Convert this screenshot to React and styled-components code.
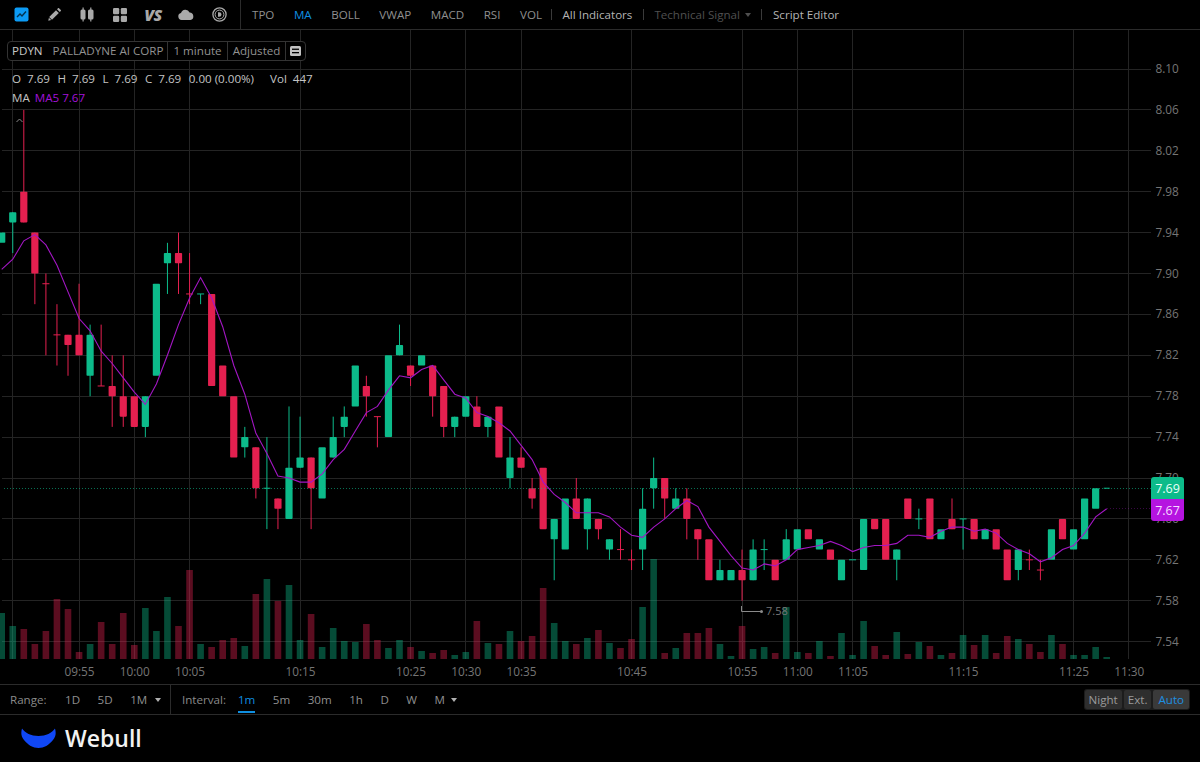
import React from "react";
import styled, { createGlobalStyle } from "styled-components";

const GlobalStyle = createGlobalStyle`
  html, body {
    margin: 0;
    padding: 0;
    background: #000;
  }
  body {
    font-family: "Open Sans", "Liberation Sans", sans-serif;
    font-size: 11.6px;
    color: #a6a6a6;
    overflow: hidden;
  }
`;

const Page = styled.div`
  width: 1200px;
  height: 762px;
  display: flex;
  flex-direction: column;
  background: #000;
`;

const TopBar = styled.header`
  height: 29px;
  display: flex;
  align-items: center;
  border-bottom: 1px solid #2b2b2b;
  flex: none;
`;

const IconGroup = styled.div`
  width: 241px;
  height: 29px;
  box-sizing: border-box;
  padding-left: 4.5px;
  display: flex;
  align-items: center;
  border-right: 1px solid #2b2b2b;
`;

const IconSlot = styled.span`
  width: 33px;
  height: 29px;
  display: flex;
  align-items: center;
  justify-content: center;
  color: #a9a9a9;
`;

const VsMark = styled.span`
  font-size: 16px;
  font-weight: 800;
  font-style: italic;
  letter-spacing: -0.5px;
  color: #a9a9a9;
`;

const Indicators = styled.nav`
  display: flex;
  align-items: center;
  gap: 19.5px;
  padding-left: 11px;
`;

const ToolItem = styled.span`
  color: ${(p) => (p.$active ? "#0f8fe0" : p.$dim ? "#4f4f4f" : p.$bright ? "#b4b4b4" : "#8f8f8f")};
  display: flex;
  align-items: center;
  white-space: nowrap;
`;

const ToolGroup = styled.div`
  display: flex;
  align-items: center;
  margin-left: 9px;
`;

const ToolDivider = styled.i`
  width: 1px;
  height: 11px;
  background: #3a3a3a;
  margin-right: 10.5px;
`;

const ToolCell = styled.div`
  display: flex;
  align-items: center;
  margin-right: 10.5px;
`;

const Caret = styled.i`
  width: 0;
  height: 0;
  margin-left: ${(p) => p.$gap || 6}px;
  margin-top: 1px;
  border-left: 3px solid transparent;
  border-right: 3px solid transparent;
  border-top: 4px solid ${(p) => p.$color || "#b0b0b0"};
`;

const ChartPanel = styled.main`
  position: relative;
  height: 654px;
  flex: none;
  overflow: hidden;
`;

const ChartSvg = styled.svg`
  display: block;
  width: 1200px;
  height: 654px;
  font-family: "Open Sans", "Liberation Sans", sans-serif;
`;

const Legend = styled.div`
  position: absolute;
  left: 7px;
  top: 11px;
  display: flex;
  flex-direction: column;
  color: #c4c4c4;
`;

const InfoBox = styled.div`
  display: inline-flex;
  align-self: flex-start;
  height: 20px;
  box-sizing: border-box;
  align-items: center;
  border: 1px solid #333;
  border-radius: 4px;
  background: #000;
`;

const InfoCell = styled.span`
  display: flex;
  align-items: center;
  height: 100%;
  box-sizing: border-box;
  padding: 0 ${(p) => p.$pad ?? 5}px 1px;
  border-right: ${(p) => (p.$last ? "none" : "1px solid #333")};
  color: #929292;
  white-space: nowrap;
`;

const Ticker = styled.span`
  color: #c8c8c8;
  margin-right: 10px;
`;

const QuoteRow = styled.div`
  display: flex;
  align-items: center;
  height: 19px;
  margin-top: ${(p) => p.$top || 0}px;
  padding-left: 5px;
  white-space: nowrap;
`;

const QuoteLabel = styled.span`
  margin-right: ${(p) => p.$gap ?? 6}px;
`;

const QuoteValue = styled.span`
  margin-right: ${(p) => p.$gap ?? 7.5}px;
`;

const MaValue = styled.span`
  color: #a312d8;
`;

const PriceBadge = styled.div`
  position: absolute;
  left: 1151px;
  top: ${(p) => p.$top}px;
  width: 33px;
  height: ${(p) => p.$h}px;
  display: flex;
  align-items: center;
  justify-content: center;
  background: ${(p) => p.$bg};
  border-radius: ${(p) => p.$radius};
  color: ${(p) => p.$fg};
  font-size: 12.5px;
`;

const RangeBar = styled.div`
  height: 29px;
  flex: none;
  display: flex;
  align-items: center;
  border-top: 1px solid #2b2b2b;
  border-bottom: 1px solid #2b2b2b;
`;

const RangeGroup = styled.div`
  width: 171px;
  height: 100%;
  box-sizing: border-box;
  padding-left: 10px;
  display: flex;
  align-items: center;
  border-right: 1px solid #2b2b2b;
`;

const IntervalGroup = styled.div`
  height: 100%;
  box-sizing: border-box;
  flex: 1;
  padding-left: 11px;
  display: flex;
  align-items: center;
`;

const BarLabel = styled.span`
  color: #8a8a8a;
  margin-right: ${(p) => p.$gap}px;
`;

const PeriodButton = styled.span`
  position: relative;
  display: flex;
  align-items: center;
  height: 100%;
  margin-right: ${(p) => p.$gap ?? 17.5}px;
  color: ${(p) => (p.$active ? "#0f8fe0" : "#8f8f8f")};

  ${(p) =>
    p.$active &&
    `
    &::after {
      content: "";
      position: absolute;
      left: 0;
      right: 0;
      bottom: 1px;
      height: 2px;
      background: #0f8fe0;
    }
  `}
`;

const SessionSwitch = styled.div`
  display: flex;
  gap: 2px;
  padding: 1px;
  margin-right: 10px;
  border-radius: 3px;
  background: #1c1c1c;
`;

const SessionButton = styled.span`
  height: 19px;
  padding: 0 ${(p) => p.$pad}px;
  display: flex;
  align-items: center;
  border-radius: 2px;
  background: ${(p) => (p.$active ? "#3a3a3a" : "#2e2e2e")};
  color: ${(p) => (p.$active ? "#1f8fe0" : "#9a9a9a")};
`;

const Brand = styled.footer`
  flex: 1;
  display: flex;
  align-items: center;
  gap: 9px;
  padding: 0 0 2px 21px;
`;

const BrandName = styled.span`
  color: #f2f2f2;
  font-size: 23px;
  font-weight: 600;
  line-height: 1;
  padding-top: 2px;
`;

// u / d, body top, body bottom, high, low (in cents)
const candles = [
  ["u", 794, 793],
  ["u", 796, 795, 796, 792],
  ["d", 798, 795, 806, 795],
  ["d", 794, 790, 794, 787],
  ["d", 789, 789, 790, 782],
  ["d", 784, 784, 787, 781],
  ["d", 784, 783, 784, 780],
  ["d", 784, 782, 789, 782],
  ["u", 784, 780, 785, 778],
  ["d", 779, 779, 785, 779],
  ["d", 779, 778, 782, 775],
  ["d", 778, 776, 782, 775],
  ["d", 778, 775],
  ["u", 778, 775, 778, 774],
  ["u", 789, 780],
  ["u", 792, 791, 793, 788],
  ["d", 792, 791, 794, 788],
  ["d", 788, 788, 792, 787],
  ["u", 788, 788, 788, 787],
  ["d", 788, 779],
  ["d", 781, 778],
  ["d", 778, 772],
  ["u", 774, 773, 775, 772],
  ["d", 773, 769, 773, 768],
  ["u", 769, 769, 774, 765],
  ["d", 768, 767, 768, 765],
  ["u", 771, 766, 777, 766],
  ["u", 772, 771, 776, 771],
  ["d", 772, 769, 772, 765],
  ["u", 773, 768],
  ["u", 774, 772, 776, 772],
  ["u", 776, 775, 777, 774],
  ["u", 781, 777],
  ["d", 779, 778, 780, 776],
  ["d", 776, 776, 776, 773],
  ["u", 782, 774],
  ["u", 783, 782, 785, 782],
  ["d", 781, 780, 781, 779],
  ["u", 782, 781],
  ["d", 781, 778, 781, 776],
  ["d", 779, 775, 779, 774],
  ["u", 776, 775, 776, 774],
  ["u", 778, 776],
  ["d", 777, 775, 778, 775],
  ["u", 776, 775, 776, 774],
  ["d", 777, 772],
  ["u", 772, 770, 774, 769],
  ["d", 772, 771, 773, 771],
  ["d", 769, 768, 770, 767],
  ["d", 771, 765],
  ["u", 766, 764, 766, 760],
  ["u", 768, 763],
  ["d", 768, 766, 770, 766],
  ["u", 768, 765, 768, 763],
  ["d", 766, 765, 766, 764],
  ["u", 764, 763, 764, 762],
  ["d", 763, 763, 765, 762],
  ["d", 762, 762, 763, 761],
  ["u", 767, 763, 769, 761],
  ["u", 770, 769, 772, 767],
  ["d", 770, 768, 770, 766],
  ["u", 768, 767, 769, 767],
  ["d", 768, 766, 769, 764],
  ["d", 765, 764, 765, 762],
  ["d", 764, 760],
  ["u", 761, 760, 762, 760],
  ["u", 761, 760],
  ["d", 761, 760, 763, 758],
  ["u", 763, 760, 764, 760],
  ["u", 763, 763, 764, 761],
  ["d", 762, 760],
  ["u", 764, 762, 765, 762],
  ["u", 765, 763],
  ["d", 765, 764],
  ["u", 764, 763],
  ["d", 763, 762],
  ["u", 762, 760],
  ["u", 762, 762],
  ["u", 766, 761],
  ["d", 766, 765],
  ["d", 766, 762],
  ["u", 763, 762, 763, 760],
  ["d", 768, 766],
  ["u", 766, 766, 767, 765],
  ["d", 768, 764],
  ["u", 765, 764],
  ["d", 766, 765, 768, 765],
  ["u", 766, 766, 766, 763],
  ["d", 766, 764],
  ["u", 765, 764],
  ["d", 765, 763],
  ["d", 763, 760],
  ["u", 763, 761, 763, 760],
  ["d", 762, 762, 763, 761],
  ["d", 761, 761, 762, 760],
  ["u", 765, 762],
  ["d", 766, 764],
  ["u", 765, 763],
  ["u", 768, 764],
  ["u", 769, 767],
  ["u", 769, 769],
];

const volumes = [
  46, 33, 30, 15, 28, 60, 50, 7, 15, 37, 15, 46, 14, 51, 28, 62, 33, 89, 15, 12, 19,
  21, 13, 65, 80, 58, 74, 19, 45, 12, 31, 18, 17, 35, 19, 11, 19, 12, 8, 6, 9, 4, 7,
  38, 16, 15, 28, 18, 23, 71, 36, 18, 15, 21, 29, 16, 11, 20, 52, 100, 6, 11, 26, 26,
  31, 15, 3, 33, 10, 12, 6, 52, 7, 6, 18, 3, 26, 4, 38, 13, 4, 27, 5, 17, 13, 4, 6,
  24, 14, 24, 6, 23, 20, 15, 7, 24, 15, 4, 4, 12, 2,
];

const GREEN = "#0cbb8a";
const RED = "#e3204f";
const PURPLE = "#a316c4";
const BASE = 659;

const xOf = (i) => 1.7 + 11.05 * i;
const yOf = (c) => 69 + (810 - c) * 10.225;

const priceTicks = [810, 806, 802, 798, 794, 790, 786, 782, 778, 774, 770, 766, 762, 758, 754];

const timeTicks = [
  [1, ""], [7, "09:55"], [12, "10:00"], [17, "10:05"], [27, "10:15"], [37, "10:25"],
  [42, "10:30"], [47, "10:35"], [57, "10:45"], [67, "10:55"], [72, "11:00"], [77, "11:05"],
  [87, "11:15"], [97, "11:25"], [102, "11:30"],
];

const seedCloses = [791, 786, 787, 794];
const closes = candles.map((c) => (c[0] === "u" ? c[1] : c[2]));
const maPoints = closes
  .map((_, i) => {
    const all = [...seedCloses, ...closes];
    const win = all.slice(i, i + 5);
    const avg = win.reduce((a, b) => a + b, 0) / 5;
    return `${xOf(i).toFixed(1)},${yOf(avg).toFixed(1)}`;
  })
  .join(" ");

const Candle = ({ row, i }) => {
  const [dir, top, bottom, high, low] = row;
  const x = xOf(i);
  const color = dir === "u" ? GREEN : RED;
  const doji = top === bottom;
  return (
    <g fill={color}>
      {high !== undefined && (
        <rect x={x - 0.5} y={yOf(high)} width="1" height={yOf(low) - yOf(high)} />
      )}
      {doji ? (
        <rect x={x - (i === 100 ? 3 : 3.5)} y={yOf(top) - 0.5} width={i === 100 ? 6 : 7} height="1" />
      ) : (
        <rect x={x - 3.6} y={yOf(top)} width="7.2" height={yOf(bottom) - yOf(top)} rx="0.8" />
      )}
    </g>
  );
};

const PriceChart = () => (
  <ChartSvg viewBox="0 30 1200 654">
    <g shapeRendering="crispEdges" stroke="#242424">
      {priceTicks.map((c) => (
        <line key={c} x1="2" x2="1151" y1={yOf(c)} y2={yOf(c)} />
      ))}
      {timeTicks.map(([i]) => (
        <line key={i} x1={xOf(i)} x2={xOf(i)} y1="30" y2={BASE} />
      ))}
    </g>
    {volumes.map((h, i) => (
      <rect
        key={i}
        x={i === 0 ? 0 : xOf(i) - 3.3}
        y={BASE - h}
        width={i === 0 ? 5 : 6.6}
        height={h}
        fill={candles[i][0] === "u" ? GREEN : RED}
        fillOpacity="0.4"
      />
    ))}
    {candles.map((row, i) => (
      <Candle key={i} row={row} i={i} />
    ))}
    <polyline points={maPoints} fill="none" stroke={PURPLE} strokeWidth="1.1" />
    <line x1="4" x2="1151" y1="488.5" y2="488.5" stroke={GREEN} strokeOpacity="0.6" strokeDasharray="1 2" />
    <line x1="1107" x2="1151" y1="508.5" y2="508.5" stroke={PURPLE} strokeOpacity="0.35" strokeDasharray="1 2" />
    <polyline points="16.5,122 19.5,119 22.5,122" fill="none" stroke="#8a8a8a" strokeWidth="1" />
    <polyline points="741.5,606 741.5,611.5 761,611.5" fill="none" stroke="#8a8a8a" strokeWidth="1" />
    <circle cx="761.5" cy="611.5" r="1.5" fill="#8a8a8a" />
    <text x="766" y="615" fontSize="11" fill="#777">7.58</text>
    {priceTicks.map((c) => (
      <text key={c} x="1155.5" y={yOf(c) + 4} fontSize="11.8" fill="#757575">
        {(c / 100).toFixed(2)}
      </text>
    ))}
    {timeTicks.map(([i, label]) => (
      <text key={i} x={xOf(i) + 0.5} y="676" fontSize="11.8" fill="#757575" textAnchor="middle">
        {label}
      </text>
    ))}
  </ChartSvg>
);

const ChartIcon = () => (
  <svg width="15" height="15" viewBox="0 0 15 15">
    <rect x="0.5" y="0.5" width="14" height="14" rx="2" fill="#0c9bf5" />
    <polyline points="3,10 6,7 8,9 12,4.5" fill="none" stroke="#04334f" strokeWidth="1.4" />
  </svg>
);

const PencilIcon = () => (
  <svg width="15" height="15" viewBox="0 0 15 15" fill="currentColor">
    <path d="M2.2 10 9 3.2l2.8 2.8L5 12.8z" />
    <path d="M1.300 13.700 1.900 10.800 4.200 13.100z" />
    <path d="M10 2.200l1-1c.3-.3.7-.3 1 0l1.800 1.800c.3.3.3.7 0 1l-1 1z" />
  </svg>
);

const CandleIcon = () => (
  <svg width="14" height="15" viewBox="0 0 14 15" fill="currentColor">
    <rect x="0.5" y="2.5" width="5" height="10" rx="1.5" />
    <rect x="2.5" y="0.5" width="1.2" height="14" />
    <rect x="8" y="2.5" width="5.5" height="10" rx="1.5" />
    <rect x="10.2" y="0.5" width="1.2" height="14" />
  </svg>
);

const GridIcon = () => (
  <svg width="14" height="14" viewBox="0 0 14 14" fill="currentColor">
    <rect x="0" y="0" width="6.2" height="6.2" rx="1.2" />
    <rect x="7.8" y="0" width="6.2" height="6.2" rx="1.2" />
    <rect x="0" y="7.8" width="6.2" height="6.2" rx="1.2" />
    <rect x="7.8" y="7.8" width="6.2" height="6.2" rx="1.2" />
  </svg>
);

const CloudIcon = () => (
  <svg width="16" height="11" viewBox="0 0 16 11" fill="currentColor">
    <path d="M3.6 11A3.5 3.5 0 0 1 3 4.100 4.600 4.600 0 0 1 11.600 3.500 3.800 3.800 0 0 1 12.400 11z" />
  </svg>
);

const ReplayIcon = () => (
  <svg width="15" height="15" viewBox="0 0 15 15" fill="none" stroke="currentColor">
    <circle cx="7.5" cy="7.5" r="6.6" strokeWidth="1.3" />
    <circle cx="7.5" cy="7.5" r="4.4" strokeWidth="1" />
    <path d="M6 5.200h1.200a2.300 2.300 0 0 1 0 4.600H6z" fill="currentColor" stroke="none" />
  </svg>
);

const ListIcon = () => (
  <svg width="11" height="10" viewBox="0 0 11 10">
    <rect width="11" height="10" rx="1.5" fill="#c2c2c2" />
    <rect x="2" y="2.6" width="7" height="1.3" fill="#000" />
    <rect x="2" y="6" width="7" height="1.3" fill="#000" />
  </svg>
);

const WebullMark = () => (
  <svg width="35" height="20" viewBox="0 0 35 20">
    <path
      d="M1 .5C4 5 10 8 17.500 8 25 8 31 5 34 .5c1.200 4.500 1 7.500-2 11.500-4 5-9 8-14.500 8S7 17 3 12C0 8-.2 5 1 .5z"
      fill="#1047f5"
    />
  </svg>
);

export default function App() {
  return (
    <Page>
      <GlobalStyle />
      <TopBar>
        <IconGroup>
          <IconSlot><ChartIcon /></IconSlot>
          <IconSlot><PencilIcon /></IconSlot>
          <IconSlot><CandleIcon /></IconSlot>
          <IconSlot><GridIcon /></IconSlot>
          <IconSlot><VsMark>VS</VsMark></IconSlot>
          <IconSlot><CloudIcon /></IconSlot>
          <IconSlot><ReplayIcon /></IconSlot>
        </IconGroup>
        <Indicators>
          <ToolItem>TPO</ToolItem>
          <ToolItem $active>MA</ToolItem>
          <ToolItem>BOLL</ToolItem>
          <ToolItem>VWAP</ToolItem>
          <ToolItem>MACD</ToolItem>
          <ToolItem>RSI</ToolItem>
          <ToolItem>VOL</ToolItem>
        </Indicators>
        <ToolGroup>
          <ToolDivider />
          <ToolCell><ToolItem $bright>All Indicators</ToolItem></ToolCell>
          <ToolDivider />
          <ToolCell>
            <ToolItem $dim>Technical Signal<Caret $gap={5} $color="#4f4f4f" /></ToolItem>
          </ToolCell>
          <ToolDivider />
          <ToolItem $bright>Script Editor</ToolItem>
        </ToolGroup>
      </TopBar>

      <ChartPanel>
        <PriceChart />
        <Legend>
          <InfoBox>
            <InfoCell $pad={4}><Ticker>PDYN</Ticker>PALLADYNE AI CORP</InfoCell>
            <InfoCell>1 minute</InfoCell>
            <InfoCell>Adjusted</InfoCell>
            <InfoCell $last $pad={4}><ListIcon /></InfoCell>
          </InfoBox>
          <QuoteRow $top={8}>
            <QuoteLabel>O</QuoteLabel><QuoteValue>7.69</QuoteValue>
            <QuoteLabel>H</QuoteLabel><QuoteValue>7.69</QuoteValue>
            <QuoteLabel>L</QuoteLabel><QuoteValue>7.69</QuoteValue>
            <QuoteLabel>C</QuoteLabel><QuoteValue>7.69</QuoteValue>
            <QuoteValue $gap={16}>0.00 (0.00%)</QuoteValue>
            <QuoteLabel>Vol</QuoteLabel><QuoteValue>447</QuoteValue>
          </QuoteRow>
          <QuoteRow>
            <QuoteLabel $gap={5}>MA</QuoteLabel>
            <MaValue>MA5 7.67</MaValue>
          </QuoteRow>
        </Legend>
        <PriceBadge $top={447} $h={22} $bg={GREEN} $fg="#e8fff8" $radius="3px 3px 0 0">7.69</PriceBadge>
        <PriceBadge $top={469} $h={22} $bg="#b514e0" $fg="#f6dcff" $radius="0 0 3px 3px">7.67</PriceBadge>
      </ChartPanel>

      <RangeBar>
        <RangeGroup>
          <BarLabel $gap={18.5}>Range:</BarLabel>
          <PeriodButton>1D</PeriodButton>
          <PeriodButton>5D</PeriodButton>
          <PeriodButton $gap={0}>1M<Caret $gap={8} /></PeriodButton>
        </RangeGroup>
        <IntervalGroup>
          <BarLabel $gap={12}>Interval:</BarLabel>
          <PeriodButton $active>1m</PeriodButton>
          <PeriodButton>5m</PeriodButton>
          <PeriodButton>30m</PeriodButton>
          <PeriodButton>1h</PeriodButton>
          <PeriodButton>D</PeriodButton>
          <PeriodButton>W</PeriodButton>
          <PeriodButton $gap={0}>M<Caret /></PeriodButton>
        </IntervalGroup>
        <SessionSwitch>
          <SessionButton $pad={4}>Night</SessionButton>
          <SessionButton $pad={4}>Ext.</SessionButton>
          <SessionButton $active $pad={5}>Auto</SessionButton>
        </SessionSwitch>
      </RangeBar>

      <Brand>
        <WebullMark />
        <BrandName>Webull</BrandName>
      </Brand>
    </Page>
  );
}
